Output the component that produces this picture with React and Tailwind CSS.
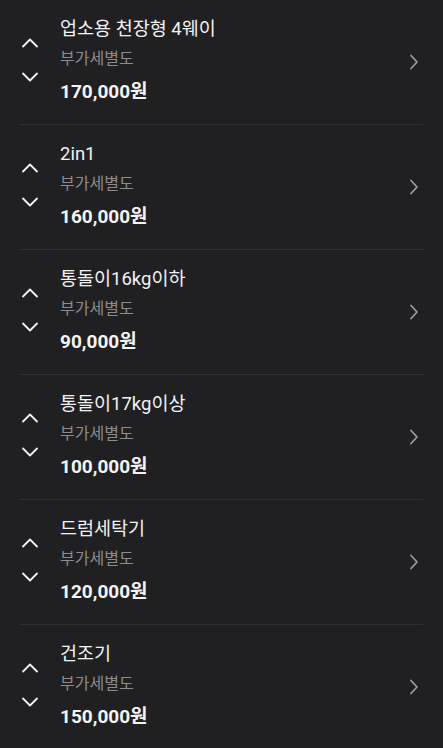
import React from 'react';

const items = [
  { name: '업소용 천장형 4웨이', price: '170,000원' },
  { name: '2in1', price: '160,000원' },
  { name: '통돌이16kg이하', price: '90,000원' },
  { name: '통돌이17kg이상', price: '100,000원' },
  { name: '드럼세탁기', price: '120,000원' },
  { name: '건조기', price: '150,000원' },
];

const Up = () => (
  <svg width="18" height="10" viewBox="0 0 18 10" fill="none" stroke="#f2f2f2" strokeWidth="1.8" strokeLinecap="round" strokeLinejoin="round">
    <path d="M2 8.5 L9 1.5 L16 8.5" />
  </svg>
);

const Down = () => (
  <svg width="18" height="10" viewBox="0 0 18 10" fill="none" stroke="#f2f2f2" strokeWidth="1.8" strokeLinecap="round" strokeLinejoin="round">
    <path d="M2 1.5 L9 8.5 L16 1.5" />
  </svg>
);

const Right = () => (
  <svg width="10" height="16" viewBox="0 0 10 16" fill="none" stroke="#9a9a9c" strokeWidth="1.8" strokeLinecap="round" strokeLinejoin="round">
    <path d="M2 1.5 L8 8 L2 14.5" />
  </svg>
);

export default function App() {
  return (
    <div className="min-h-screen bg-[#202022] px-5 text-[#f2f2f2]" style={{ fontFamily: 'Roboto, "Noto Sans CJK KR", sans-serif' }}>
      {items.map((it, i) => (
        <div key={i} className={`flex items-center pt-[14px] pb-[14px] ${i < items.length - 1 ? 'border-b border-[#313133]' : ''}`}>
          <div className="flex w-10 flex-col items-start gap-[24px] pl-[1px] pb-[4px]">
            <Up />
            <Down />
          </div>
          <div className="flex-1">
            <div className="text-[18.5px] leading-[30px] text-[#f2f2f2]">{it.name}</div>
            <div className="text-[16px] leading-[30px] text-[#8c8c8e]">부가세별도</div>
            <div className="text-[19px] font-bold leading-[36px] text-[#f4f4f4]">{it.price}</div>
          </div>
          <div className="pr-[4px]">
            <Right />
          </div>
        </div>
      ))}
    </div>
  );
}
